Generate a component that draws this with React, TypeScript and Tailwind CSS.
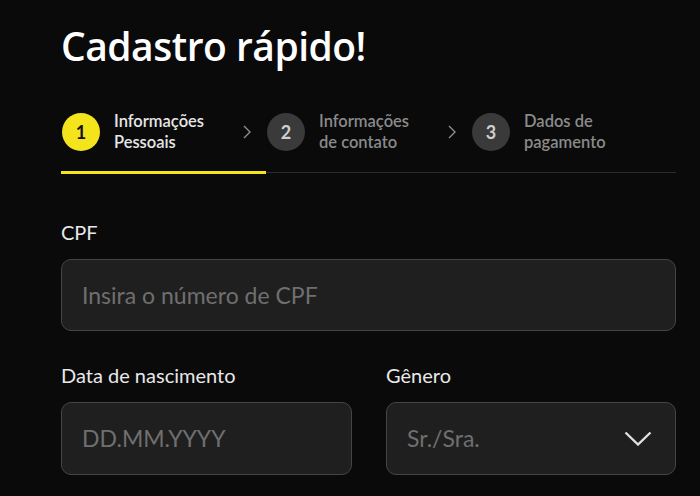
const steps = [
  { n: 1, label: ["Informações", "Pessoais"], active: true },
  { n: 2, label: ["Informações", "de contato"], active: false },
  { n: 3, label: ["Dados de", "pagamento"], active: false },
];

function Step({ n, label, active }: { n: number; label: string[]; active: boolean }) {
  return (
    <div className="flex items-center gap-[14px]">
      <div
        className={
          active
            ? "flex h-[38px] w-[38px] shrink-0 items-center justify-center rounded-full bg-[#f3e41c] text-[18px] font-bold text-[#111]"
            : "flex h-[38px] w-[38px] shrink-0 items-center justify-center rounded-full bg-[#3a3a3a] text-[18px] font-bold text-[#cfcfcf]"
        }
      >
        {n}
      </div>
      <div
        className={
          active
            ? "text-[16.5px] font-semibold leading-[21px] text-[#e6e6e6]"
            : "text-[16.5px] font-semibold leading-[21px] text-[#8a8a8a]"
        }
      >
        {label[0]}
        <br />
        {label[1]}
      </div>
    </div>
  );
}

function Arrow() {
  return (
    <svg width="8" height="14" viewBox="0 0 8 14" className="mr-[16px] shrink-0">
      <path d="M1 1l6 6-6 6" fill="none" stroke="#8d8d8d" strokeWidth="1.4" />
    </svg>
  );
}

export default function App() {
  return (
    <div className="h-[496px] w-[700px] overflow-hidden bg-[#0a0a0a] font-['Lato',sans-serif]">
      <div className="ml-[61px] w-[615px] pt-[20px]">
        <h1 className="font-['Open_Sans',sans-serif] text-[39px] font-semibold leading-[52px] tracking-[-0.5px] text-white">
          Cadastro rápido!
        </h1>

        {/* stepper */}
        <div className="mt-[39px] flex items-center pl-[1px]">
          <div className="w-[181px]">
            <Step {...steps[0]} />
          </div>
          <Arrow />
          <div className="w-[181px]">
            <Step {...steps[1]} />
          </div>
          <Arrow />
          <Step {...steps[2]} />
        </div>
        <div className="mt-[18px] flex items-start">
          <div className="h-[3px] w-[205px] bg-[#f3e41c]" />
          <div className="mt-[1px] h-[1px] flex-1 bg-[#2c2c2c]" />
        </div>

        {/* CPF */}
        <div className="mt-[46px] text-[20px] leading-[24px] text-[#e8e8e8]">CPF</div>
        <div className="mt-[15px] flex h-[72px] items-center rounded-[10px] border border-[#454545] bg-[#1f1f1f] px-[20px] text-[23px] text-[#6f6f6f]">
          Insira o número de CPF
        </div>

        <div className="mt-[32px] flex gap-[34px]">
          <div className="w-[291px]">
            <div className="text-[20px] leading-[24px] text-[#e8e8e8]">Data de nascimento</div>
            <div className="mt-[15px] flex h-[73px] items-center rounded-[10px] border border-[#454545] bg-[#1f1f1f] px-[20px] text-[23px] text-[#6f6f6f]">
              DD.MM.YYYY
            </div>
          </div>
          <div className="flex-1">
            <div className="text-[20px] leading-[24px] text-[#e8e8e8]">Gênero</div>
            <div className="mt-[15px] flex h-[73px] items-center justify-between rounded-[10px] border border-[#454545] bg-[#1f1f1f] pl-[20px] pr-[23px] text-[23px] text-[#6f6f6f]">
              Sr./Sra.
              <svg width="28" height="15" viewBox="0 0 28 15">
                <path d="M1.5 1.5l12.5 12 12.5-12" fill="none" stroke="#e0e0e0" strokeWidth="2.4" />
              </svg>
            </div>
          </div>
        </div>
      </div>
    </div>
  );
}
